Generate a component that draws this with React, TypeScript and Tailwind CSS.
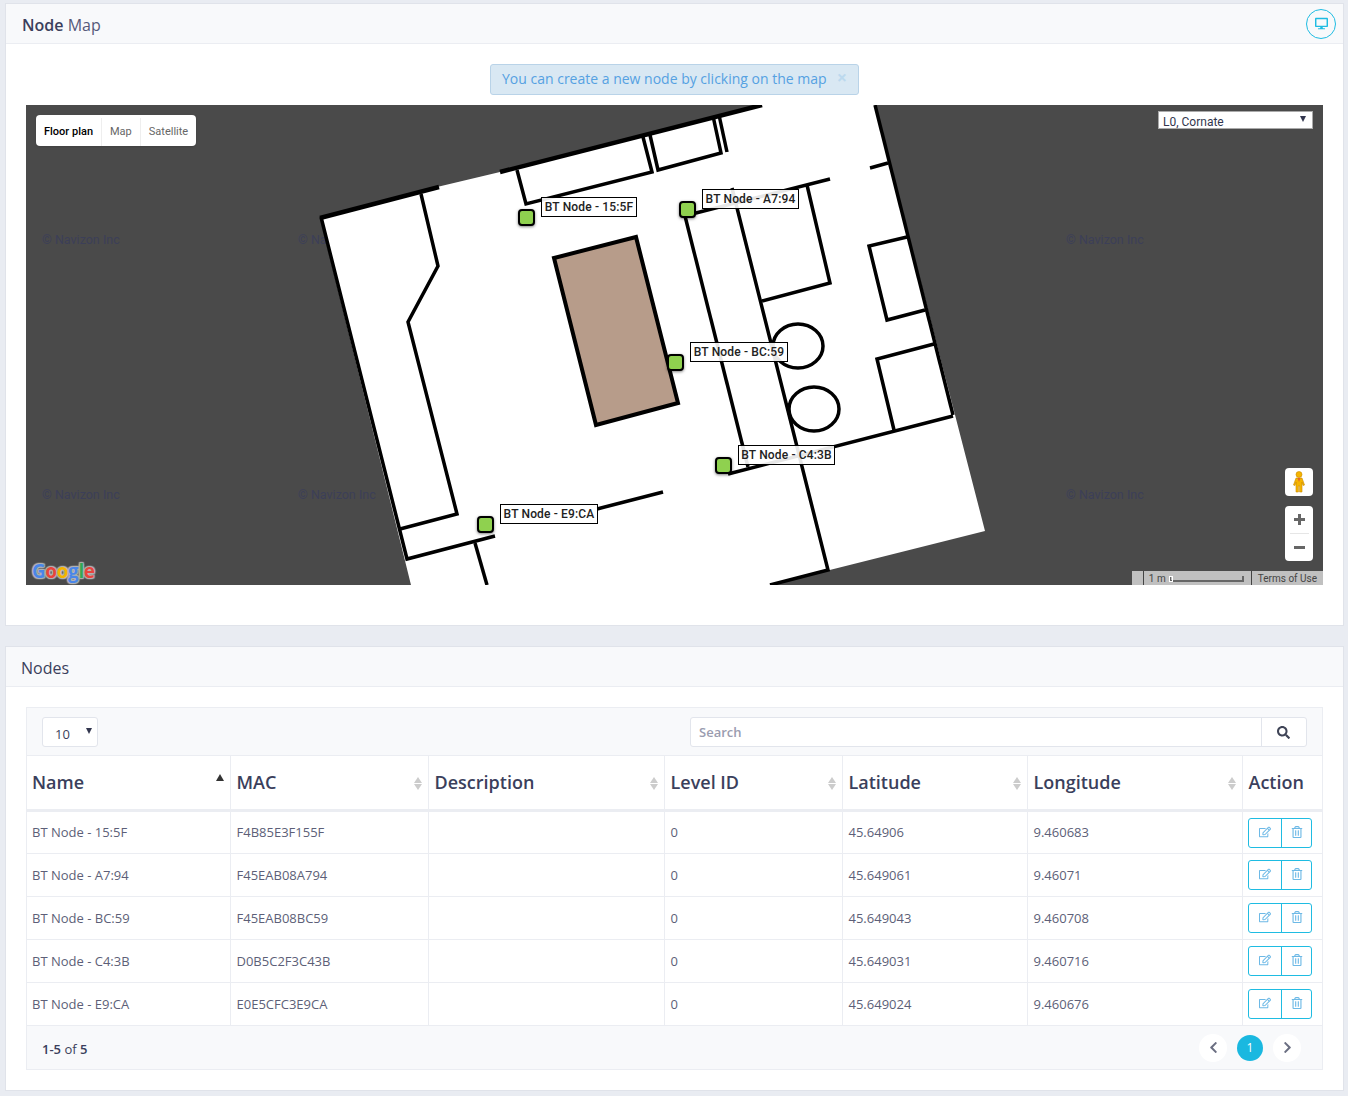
import { FaChevronLeft, FaChevronRight, FaDesktop, FaRegEdit, FaRegTrashAlt, FaSearch } from 'react-icons/fa'

const nodes = [
  { name: 'BT Node - 15:5F', mac: 'F4B85E3F155F', lat: '45.64906', lng: '9.460683' },
  { name: 'BT Node - A7:94', mac: 'F45EAB08A794', lat: '45.649061', lng: '9.46071' },
  { name: 'BT Node - BC:59', mac: 'F45EAB08BC59', lat: '45.649043', lng: '9.460708' },
  { name: 'BT Node - C4:3B', mac: 'D0B5C2F3C43B', lat: '45.649031', lng: '9.460716' },
  { name: 'BT Node - E9:CA', mac: 'E0E5CFC3E9CA', lat: '45.649024', lng: '9.460676' },
]

// pins are placed relative to the map canvas
const pins = [
  { label: 'BT Node - 15:5F', x: 492, y: 104, lx: 515, ly: 92, w: 96 },
  { label: 'BT Node - A7:94', x: 653, y: 96, lx: 676, ly: 84, w: 97 },
  { label: 'BT Node - BC:59', x: 641, y: 249, lx: 664, ly: 237, w: 98 },
  { label: 'BT Node - C4:3B', x: 689, y: 352, lx: 712, ly: 340, w: 97 },
  { label: 'BT Node - E9:CA', x: 451, y: 411, lx: 474, ly: 399, w: 98 },
]

const watermarks = [
  { x: 16, y: 127 },
  { x: 272, y: 127 },
  { x: 1040, y: 127 },
  { x: 16, y: 382 },
  { x: 272, y: 382 },
  { x: 1040, y: 382 },
]

const columns = ['Name', 'MAC', 'Description', 'Level ID', 'Latitude', 'Longitude']

function FloorPlan() {
  return (
    <svg viewBox="26 105 1297 480" className="block h-[480px] w-[1297px]">
      <polygon points="320,217 437,187 500,172 760,105 875,105 985,531 770,585 411,585" fill="#fff" />
      <g fill="none" stroke="#000" strokeWidth="3.5" strokeLinejoin="miter">
        <path d="M320 218 L439 187" strokeWidth="4.5" />
        <path d="M500 172 L762 105" strokeWidth="4.5" />
        <path d="M321 217 L407 559 L495 536" />
        <path d="M421 194 L438 266 L408 322 L457 514 L400 529" />
        <path d="M475 543 L487 585" />
        <path d="M517 170 L526 204 L652 172 L643 137" />
        <path d="M650 135 L658 170 L721 153 L713 116" />
        <path d="M719 115 L727 152" />
        <path d="M688 215 L830 179" />
        <path d="M685 216 L748 467" />
        <path d="M732 188 L828 570 L770 585" />
        <path d="M807 185 L830 283 L762 301" />
        <path d="M875 105 L953 415" />
        <path d="M870 168 L888 163" />
        <path d="M907 237 L869 246 L887 320 L925 310" />
        <path d="M934 344 L877 359 L894 430" />
        <path d="M953 416 L728 474" />
        <path d="M597 509 L663 492" />
        <ellipse cx="798" cy="346" rx="25" ry="22" />
        <ellipse cx="814" cy="409" rx="25" ry="22" />
      </g>
      <polygon points="636,237 554,258 596,425 678,403" fill="#b79c8a" stroke="#000" strokeWidth="4" />
    </svg>
  )
}

function Pegman() {
  return (
    <svg viewBox="0 0 14 22" className="h-[22px] w-[14px]">
      <circle cx="7" cy="3.5" r="3" fill="#f5b400" stroke="#c98a00" strokeWidth="0.6" />
      <path
        d="M4 7 H10 L12.5 14 L11 14.5 L10 11 V21 H7.6 V15 H6.4 V21 H4 V11 L3 14.5 L1.5 14 Z"
        fill="#f5b400"
        stroke="#c98a00"
        strokeWidth="0.6"
      />
      <path d="M5.5 7 H8.5 L7 11 Z" fill="#e2672a" />
    </svg>
  )
}

function GoogleLogo() {
  return (
    <div className="absolute bottom-[1px] left-[6px] font-['Open_Sans',sans-serif] text-[19px] leading-[26px] font-bold tracking-[-0.4px] [text-shadow:0_0_2px_#bbb,0_0_2px_#bbb,1px_1px_1px_#aaa,-1px_-1px_1px_#aaa,1px_-1px_1px_#aaa,-1px_1px_1px_#aaa]">
      <span className="text-[#4a86e8]">G</span>
      <span className="text-[#e8453c]">o</span>
      <span className="text-[#f4b400]">o</span>
      <span className="text-[#4a86e8]">g</span>
      <span className="text-[#34a853]">l</span>
      <span className="text-[#e8453c]">e</span>
    </div>
  )
}

function NodeMap() {
  return (
    <div className="relative h-[480px] w-[1297px] overflow-hidden bg-[#4a4a4a] font-['Roboto',sans-serif]">
      {watermarks.map((mark) => (
        <span
          key={`${mark.x}-${mark.y}`}
          className="absolute text-[12.5px] leading-4 whitespace-nowrap text-[#3c3f58]"
          style={{ left: mark.x, top: mark.y }}
        >
          © Navizon Inc
        </span>
      ))}
      <div className="absolute inset-0">
        <FloorPlan />
      </div>

      <div className="absolute top-[10px] left-[10px] flex h-[31px] items-center rounded-sm bg-white pt-[3px] text-[11px] shadow-sm">
        <span className="flex h-full items-center border-r border-[#eee] px-2 font-medium text-black">Floor plan</span>
        <span className="flex h-full items-center border-r border-[#eee] px-2 text-[#666]">Map</span>
        <span className="flex h-full items-center px-2 text-[#666]">Satellite</span>
      </div>

      <div className="absolute top-[6px] right-[10px] flex h-[18px] w-[155px] items-center justify-between border border-[#aaa] bg-white pr-[6px] pl-1 text-[12px] text-[#32364e]">
        <span className="pt-[3px]">L0, Cornate</span>
        <span className="mb-[2px] h-0 w-0 border-x-[3px] border-t-[6px] border-x-transparent border-t-[#32364e]" />
      </div>

      {pins.map((pin) => (
        <div key={pin.label}>
          <span
            className="absolute h-[17px] w-[17px] rounded-[4px] border-[2.5px] border-black bg-[#8fd14f] shadow-[0_1px_3px_rgba(0,0,0,0.5)]"
            style={{ left: pin.x, top: pin.y }}
          />
          <span
            className="absolute flex h-5 items-center justify-center border border-black bg-white/90 text-[12px] font-medium tracking-[0.15px] whitespace-nowrap text-[#222]"
            style={{ left: pin.lx, top: pin.ly, width: pin.w }}
          >
            {pin.label}
          </span>
        </div>
      ))}

      <div className="absolute top-[363px] right-[10px] flex h-7 w-7 items-center justify-center rounded-sm bg-white">
        <Pegman />
      </div>
      <div className="absolute top-[401px] right-[10px] flex h-[55px] w-7 flex-col items-center rounded-sm bg-white">
        <div className="relative h-[27px] w-full">
          <span className="absolute top-[12px] left-[9px] h-[3px] w-[11px] bg-[#666]" />
          <span className="absolute top-[8px] left-[13px] h-[11px] w-[3px] bg-[#666]" />
        </div>
        <div className="h-px w-[19px] bg-[#e6e6e6]" />
        <div className="relative h-[27px] w-full">
          <span className="absolute top-[12px] left-[9px] h-[3px] w-[11px] bg-[#666]" />
        </div>
      </div>

      <GoogleLogo />

      <div className="absolute right-0 bottom-0 flex h-[14px] items-center bg-[#c0c0c0] text-[10px] text-[#444]">
        <span className="h-full w-[12px] border-r border-[#444]" />
        <span className="flex h-full w-[108px] items-center gap-[3px] border-r border-[#444] pl-[5px]">
          1 m
          <span className="relative mt-[2px] h-[6px] w-[75px] border-x-2 border-b-2 border-[#666]">
            <span className="absolute -bottom-[2px] -left-[2px] h-[6px] w-1 border border-white" />
          </span>
        </span>
        <span className="pr-[6px] pl-[6px]">Terms of Use</span>
      </div>
    </div>
  )
}

function SortArrows({ active }: { active?: boolean }) {
  if (active) {
    return (
      <span className="absolute top-[18px] right-[6px] h-0 w-0 border-x-[4px] border-b-[7px] border-x-transparent border-b-[#333]" />
    )
  }
  return (
    <span className="absolute top-[21px] right-[6px] flex flex-col gap-[1px]">
      <span className="h-0 w-0 border-x-[4px] border-b-[6px] border-x-transparent border-b-[#ccc]" />
      <span className="h-0 w-0 border-x-[4px] border-t-[6px] border-x-transparent border-t-[#ccc]" />
    </span>
  )
}

export default function App() {
  return (
    <div className="h-[1096px] w-[1348px] overflow-hidden bg-[#e9ecf2] pt-[3px] pr-[4px] pl-[5px] font-['Open_Sans',sans-serif] text-[#5d5f78]">
      <section className="h-[623px] border border-[#e0e3ea] bg-white">
        <header className="flex h-10 items-center justify-between border-b border-[#ebedf2] bg-[#f8f9fb] pr-[7px] pl-4">
          <h1 className="pt-[2px] text-[16px] text-[#3b3f5c]">
            <span className="font-semibold">Node</span> <span className="text-[#56597a]">Map</span>
          </h1>
          <button className="flex h-[30px] w-[30px] items-center justify-center rounded-full border border-[#1fbce2] text-[13px] text-[#1fbce2]">
            <FaDesktop />
          </button>
        </header>

        <div className="px-5">
          <div className="flex h-[61px] items-center justify-center pt-[9px]">
            <div className="flex h-[31px] w-[369px] items-center justify-between rounded-[3px] border border-[#b9d3e8] bg-[#d9e8f3] pr-[11px] pb-[2px] pl-[11px] text-[14px] text-[#55a1e2]">
              <span>You can create a new node by clicking on the map</span>
              <span className="mb-[3px] text-[18px] leading-none font-bold text-[#bcd9ee]">×</span>
            </div>
          </div>
          <NodeMap />
        </div>
      </section>

      <section className="mt-5 h-[445px] border border-[#e0e3ea] bg-white">
        <header className="flex h-10 items-center border-b border-[#ebedf2] bg-[#f8f9fb] pt-[2px] pl-[15px]">
          <h2 className="text-[16px] text-[#3b3f5c]">Nodes</h2>
        </header>

        <div className="px-5 pt-5">
          <div className="h-[363px] w-[1297px] border border-[#ebedf2]">
            <div className="flex h-[47px] items-center justify-between bg-[#f8f9fb] pr-[15px] pl-[15px]">
              <div className="flex h-[30px] w-[56px] items-center justify-between rounded-[3px] border border-[#e2e5ec] bg-white pr-[5px] pl-3 text-[13px] text-[#3b3f5c]">
                <span className="pt-[6px]">10</span>
                <span className="mb-[2px] h-0 w-0 border-x-[3px] border-t-[6px] border-x-transparent border-t-[#32364e]" />
              </div>
              <div className="flex h-[30px] w-[617px] rounded-[3px] border border-[#e2e5ec] bg-white">
                <span className="flex flex-1 items-center pt-[2px] pl-2 text-[13px] font-semibold text-[#9a9caf]">Search</span>
                <span className="flex w-[45px] items-center justify-center border-l border-[#e2e5ec] pt-[2px] pr-[2px] text-[13px] text-[#3f4456]">
                  <FaSearch />
                </span>
              </div>
            </div>

            <table className="w-full table-fixed border-collapse">
              <colgroup>
                <col className="w-[203px]" />
                <col className="w-[198px]" />
                <col className="w-[236px]" />
                <col className="w-[178px]" />
                <col className="w-[185px]" />
                <col className="w-[215px]" />
                <col />
              </colgroup>
              <thead>
                <tr className="h-[55px] border-y border-b-[3px] border-[#ebedf2]">
                  {columns.map((column, index) => (
                    <th
                      key={column}
                      className={`relative border-r border-[#ebedf2] text-left text-[18px] font-semibold text-[#3b3f5c] ${index === 0 ? 'pl-[5px]' : 'pl-[6px]'}`}
                    >
                      {column}
                      <SortArrows active={index === 0} />
                    </th>
                  ))}
                  <th className="pl-[6px] text-left text-[18px] font-semibold text-[#3b3f5c]">Action</th>
                </tr>
              </thead>
              <tbody>
                {nodes.map((node) => (
                  <tr key={node.mac} className="h-[43px] border-b border-[#ebedf2] text-[13px] text-[#5d5f78]">
                    <td className="border-r border-[#ebedf2] pt-[1px] pl-[5px]">{node.name}</td>
                    <td className="border-r border-[#ebedf2] pt-[1px] pl-[6px]">{node.mac}</td>
                    <td className="border-r border-[#ebedf2] pt-[1px] pl-[6px]"></td>
                    <td className="border-r border-[#ebedf2] pt-[1px] pl-[6px]">0</td>
                    <td className="border-r border-[#ebedf2] pt-[1px] pl-[6px]">{node.lat}</td>
                    <td className="border-r border-[#ebedf2] pt-[1px] pl-[6px]">{node.lng}</td>
                    <td className="pl-[5px]">
                      <div className="flex h-[30px] w-[64px] rounded-[3px] border border-[#1fbce2] text-[12px] text-[#6db9e6]">
                        <span className="flex w-[33px] items-center justify-center border-r border-[#1fbce2] pb-[2px]">
                          <FaRegEdit />
                        </span>
                        <span className="flex flex-1 items-center justify-center pb-[2px] pl-[1px]">
                          <FaRegTrashAlt />
                        </span>
                      </div>
                    </td>
                  </tr>
                ))}
              </tbody>
            </table>

            <div className="flex h-[43px] items-center justify-between bg-[#f8f9fb] pr-[21px] pl-[15px]">
              <span className="pt-[5px] text-[13px] text-[#3b3f5c]">
                <span className="font-semibold">1-5</span> of <span className="font-semibold">5</span>
              </span>
              <div className="flex items-center gap-[10px]">
                <span className="flex h-[28px] w-[28px] items-center justify-center rounded-full bg-white text-[13px] text-[#6b6f82]">
                  <FaChevronLeft />
                </span>
                <span className="flex h-[26px] w-[26px] items-center justify-center rounded-full bg-[#1ab8e0] text-[12px] text-white">
                  1
                </span>
                <span className="flex h-[28px] w-[28px] items-center justify-center rounded-full bg-white text-[13px] text-[#6b6f82]">
                  <FaChevronRight />
                </span>
              </div>
            </div>
          </div>
        </div>
      </section>
    </div>
  )
}
